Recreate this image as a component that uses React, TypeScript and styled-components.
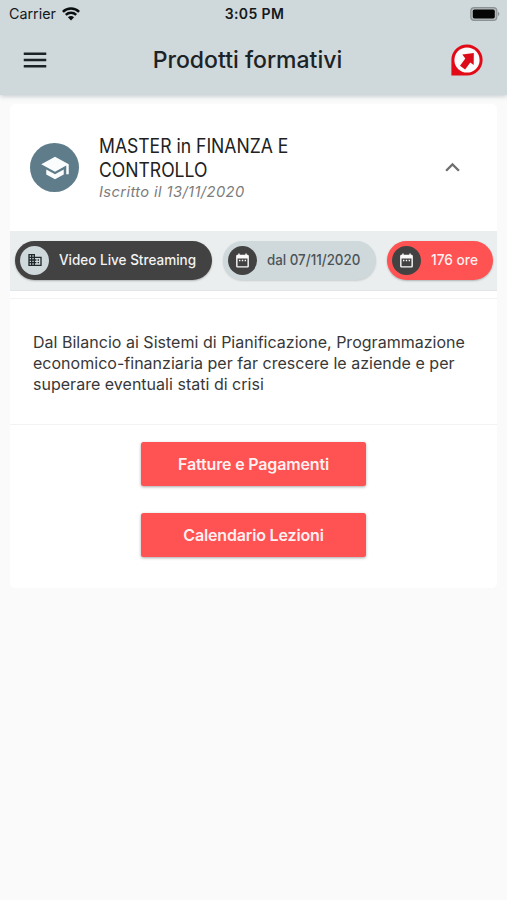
import React from 'react';
import styled, { createGlobalStyle } from 'styled-components';
import { MdDateRange, MdDomain, MdExpandLess, MdMenu, MdSchool } from 'react-icons/md';

const GlobalStyle = createGlobalStyle`
  *, *::before, *::after { box-sizing: border-box; }
  body {
    margin: 0;
    background: #fafafa;
    color: #212121;
    font-family: Inter, "Liberation Sans", sans-serif;
  }
  button { font-family: inherit; border: 0; padding: 0; background: none; color: inherit; }
  svg { display: block; flex: none; }
`;

const Screen = styled.div`
  min-height: 900px;
  background: #fafafa;
`;

const Header = styled.header`
  height: 95px;
  background: #cfd8db;
  box-shadow: 0 1px 5px rgba(60, 80, 90, 0.3);
`;

const StatusBar = styled.div`
  display: grid;
  grid-template-columns: 1fr auto 1fr;
  align-items: center;
  height: 25px;
  padding: 2px 7px 0 9px;
  color: #14191b;
`;

const Carrier = styled.div`
  display: flex;
  align-items: center;
  gap: 6px;
  font-size: 14.3px;
  line-height: 18px;
`;

const Clock = styled.div`
  font-size: 14px;
  font-weight: 600;
  letter-spacing: 0.4px;
  line-height: 18px;
`;

const BatterySlot = styled.div`
  display: flex;
  justify-content: flex-end;
`;

const AppBar = styled.div`
  display: grid;
  grid-template-columns: 60px 1fr 60px;
  align-items: center;
  height: 70px;
  padding: 0 10px 0 5px;
`;

const BarButton = styled.button`
  display: flex;
  justify-content: center;
  color: #1c2326;
`;

const Title = styled.h1`
  margin: 0;
  padding-right: 7px;
  text-align: center;
  font-size: 23px;
  font-weight: 500;
  line-height: 28px;
  color: #1c2326;
`;

const Card = styled.main`
  margin: 9px 10px 0;
  height: 484px;
  background: #fff;
  border-radius: 5px;
  overflow: hidden;
`;

const CourseHeader = styled.section`
  display: grid;
  grid-template-columns: 49px 1fr 30px;
  column-gap: 20px;
  align-items: center;
  height: 127px;
  padding: 0 29px 0 20px;
`;

const CourseText = styled.div`
  padding-bottom: 1px;
`;

const Avatar = styled.div`
  display: grid;
  place-items: center;
  width: 49px;
  height: 49px;
  border-radius: 50%;
  background: #5f7c8a;
  color: #fafcfd;
`;

const CourseTitle = styled.h2`
  margin: 0;
  font-size: 19.6px;
  font-weight: 400;
  line-height: 24.5px;
  white-space: nowrap;
  transform: scaleX(0.897);
  transform-origin: 0 50%;
`;

const Enrolled = styled.div`
  font-size: 14.7px;
  font-style: italic;
  letter-spacing: 0.4px;
  line-height: 18px;
  color: #7c7c7c;
`;

const ChipStrip = styled.section`
  display: flex;
  align-items: center;
  height: 60px;
  padding: 0 4px 1px 5px;
  gap: 11px;
  background: #ebeeef;
  border-bottom: 1px solid #e2e5e7;
`;

const tones = {
  dark: { bg: '#424242', fg: '#f3f3f3', disc: '#cfd8db', icon: '#20282c' },
  light: { bg: '#cfd8db', fg: '#4b5356', disc: '#424242', icon: '#fafafa' },
  red: { bg: '#ff5252', fg: '#fff0f0', disc: '#424242', icon: '#fafafa' },
};
type Tone = keyof typeof tones;

const ChipBox = styled.div<{ $tone: Tone; $width: number }>`
  display: flex;
  align-items: center;
  gap: 10px;
  flex: none;
  width: ${p => p.$width}px;
  height: 39px;
  padding-left: 5px;
  border-radius: 20px;
  background: ${p => tones[p.$tone].bg};
  color: ${p => tones[p.$tone].fg};
  box-shadow: 0 1px 2px rgba(0, 0, 0, ${p => (p.$tone === 'light' ? 0.14 : 0.25)});
`;

const ChipDisc = styled.span<{ $tone: Tone }>`
  display: grid;
  place-items: center;
  width: 29px;
  height: 29px;
  border-radius: 50%;
  background: ${p => tones[p.$tone].disc};
  color: ${p => tones[p.$tone].icon};
`;

const ChipLabel = styled.span<{ $squeeze: number }>`
  font-size: 14.5px;
  font-weight: 500;
  line-height: 18px;
  white-space: nowrap;
  transform: scaleX(${p => p.$squeeze});
  transform-origin: 0 50%;
`;

const Description = styled.p`
  height: 127px;
  margin: 7px 0 0;
  padding: 33px 22px 0 23px;
  border: solid #f3f3f3;
  border-width: 1px 0;
  font-size: 16px;
  letter-spacing: 0.02px;
  line-height: 21px;
  color: #383838;
`;

const Actions = styled.section`
  display: flex;
  flex-direction: column;
  align-items: center;
  gap: 27px;
  padding: 17px 0 0;
`;

const ActionButton = styled.button`
  width: 225px;
  height: 44px;
  border-radius: 2.5px;
  background: #ff5252;
  color: #fff0f0;
  font-size: 16px;
  font-weight: 600;
  letter-spacing: -0.16px;
  box-shadow: 0 1px 3px rgba(0, 0, 0, 0.35);
`;

function WifiIcon() {
  return (
    <svg width="18" height="14" viewBox="0 0 18 14" fill="none" stroke="#0c0f10" strokeWidth="2.5">
      <path d="M0.9 4.8C5.3 0.4 12.7 0.4 17.1 4.8" />
      <path d="M3.8 7.9C6.7 5.1 11.3 5.1 14.2 7.9" />
      <path d="M9 13.5 5.9 10.3Q9 7.7 12.1 10.3Z" fill="#0c0f10" stroke="none" />
    </svg>
  );
}

function BatteryIcon() {
  return (
    <svg width="30" height="14" viewBox="0 0 30 14">
      <rect x="0.8" y="0.7" width="26" height="12.6" rx="3.4" fill="#b4babc" stroke="#8b9194" strokeWidth="1.2" />
      <rect x="2.8" y="2.6" width="22" height="8.8" rx="1.6" fill="#050505" />
      <path d="M28 4.8Q30.8 7 28 9.2Z" fill="#8b9194" />
    </svg>
  );
}

function BrandMark() {
  return (
    <svg width="32" height="32" viewBox="0 0 32 32">
      <path d="M0.4 31.6V15.8A15.6 15.6 0 1 1 16 31.6Z" fill="#e20a17" />
      <circle cx="16" cy="16" r="12.6" fill="#fbfbfd" />
      <path d="M11.3 10.6 22.8 9 22.7 20.9 19.3 18.4 14.1 25.4 9 21.7 14.3 14.6Z" fill="#dc0b19" />
    </svg>
  );
}

function Chip({ tone, width, squeeze, icon, children }: {
  tone: Tone; width: number; squeeze: number; icon: React.ReactNode; children: React.ReactNode;
}) {
  return (
    <ChipBox $tone={tone} $width={width}>
      <ChipDisc $tone={tone}>{icon}</ChipDisc>
      <ChipLabel $squeeze={squeeze}>{children}</ChipLabel>
    </ChipBox>
  );
}

export default function App() {
  return (
    <Screen>
      <GlobalStyle />
      <Header>
        <StatusBar>
          <Carrier>Carrier <WifiIcon /></Carrier>
          <Clock>3:05 PM</Clock>
          <BatterySlot><BatteryIcon /></BatterySlot>
        </StatusBar>
        <AppBar>
          <BarButton aria-label="Menu"><MdMenu size={30} /></BarButton>
          <Title>Prodotti formativi</Title>
          <BarButton aria-label="Home"><BrandMark /></BarButton>
        </AppBar>
      </Header>
      <Card>
        <CourseHeader>
          <Avatar><MdSchool size={30} /></Avatar>
          <CourseText>
            <CourseTitle>MASTER in FINANZA E<br />CONTROLLO</CourseTitle>
            <Enrolled>Iscritto il 13/11/2020</Enrolled>
          </CourseText>
          <MdExpandLess size={29} color="#707070" />
        </CourseHeader>
        <ChipStrip>
          <Chip tone="dark" width={197} squeeze={0.932} icon={<MdDomain size={16} />}>Video Live Streaming</Chip>
          <Chip tone="light" width={153} squeeze={0.92} icon={<MdDateRange size={17} />}>dal 07/11/2020</Chip>
          <Chip tone="red" width={106} squeeze={0.945} icon={<MdDateRange size={17} />}>176 ore</Chip>
        </ChipStrip>
        <Description>
          Dal Bilancio ai Sistemi di Pianificazione, Programmazione economico-finanziaria per far
          crescere le aziende e per superare eventuali stati di crisi
        </Description>
        <Actions>
          <ActionButton>Fatture e Pagamenti</ActionButton>
          <ActionButton>Calendario Lezioni</ActionButton>
        </Actions>
      </Card>
    </Screen>
  );
}
